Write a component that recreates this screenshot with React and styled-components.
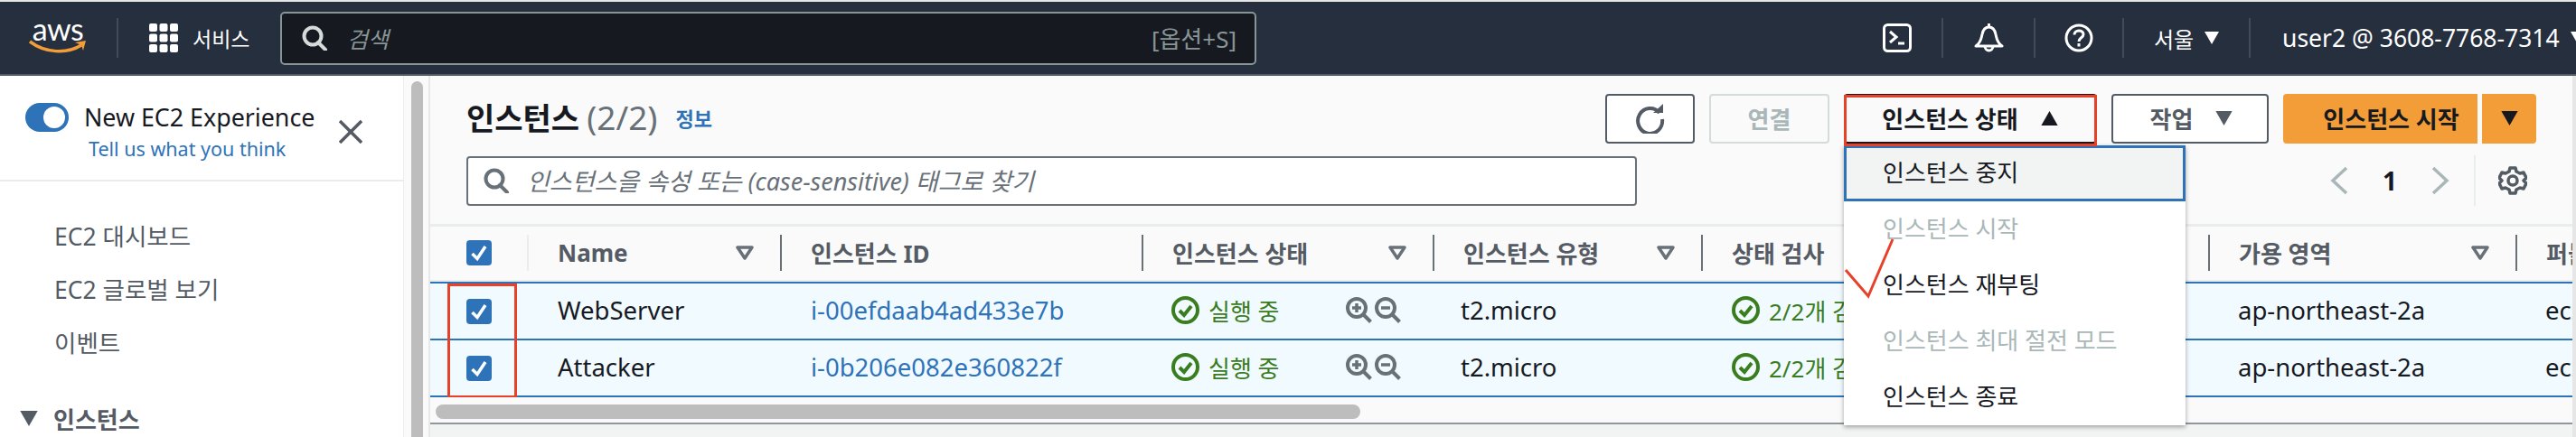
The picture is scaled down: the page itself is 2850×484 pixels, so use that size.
import React from "react";
import styled, { createGlobalStyle } from "styled-components";

const Global = createGlobalStyle`
  html, body {
    margin: 0;
    width: 2850px;
    height: 484px;
    overflow: hidden;
    background: #f2f3f3;
  }
  body, button, input {
    font-family: "Noto Sans", "Noto Sans CJK KR", sans-serif;
  }
  * { box-sizing: border-box; }
`;

const Page = styled.div`
  display: flex;
  flex-direction: column;
  width: 2850px;
  height: 484px;
  padding-top: 2px;
  background: #e6e6e6;
`;

/* top bar */
const Nav = styled.header`
  display: flex;
  align-items: center;
  flex: none;
  height: 82px;
  padding: 0 12px 0 32px;
  background: #252f3e;
  border-bottom: 2px solid #545b64;
  color: #fff;
`;

const Logo = styled.div`
  display: flex;
  flex-direction: column;
  width: 64px;
  height: 42px;
  margin-top: -2px;
`;

const LogoText = styled.span`
  font-family: "Lato", sans-serif;
  font-size: 34px;
  line-height: 24px;
  height: 24px;
  text-align: center;
  letter-spacing: -0.5px;
`;

const NavSep = styled.div`
  flex: none;
  width: 2px;
  height: 44px;
  margin-left: ${(p) => p.$ml || 0}px;
  background: #414b5a;
`;

const ServiceMenu = styled.div`
  display: flex;
  align-items: center;
  gap: 16px;
  width: 145px;
  margin-left: 34px;
  font-size: 23px;
`;

const SearchBox = styled.div`
  display: flex;
  align-items: center;
  width: 1080px;
  height: 59px;
  padding: 0 20px 0 22px;
  background: #16191f;
  border: 2px solid #879596;
  border-radius: 5px;
  color: #aab7b8;
  font-size: 25px;
`;

const SearchHint = styled.span`
  margin-left: 22px;
  font-style: italic;
  color: #879596;
`;

const SearchKey = styled.span`
  margin-left: auto;
  color: #879596;
  font-size: 26px;
`;

const NavRight = styled.div`
  display: flex;
  align-items: center;
  margin-left: auto;
`;

const NavIcon = styled.div`
  display: flex;
  justify-content: center;
  width: ${(p) => p.$w}px;
`;

const NavText = styled.div`
  display: flex;
  align-items: center;
  gap: 12px;
  width: ${(p) => p.$w}px;
  padding-left: ${(p) => p.$pl}px;
  font-size: ${(p) => p.$size}px;
  white-space: nowrap;
`;

/* body */
const Body = styled.div`
  display: flex;
  flex: 1;
  min-height: 0;
`;

const Sidebar = styled.aside`
  flex: none;
  width: 446px;
  background: #fff;
  overflow: hidden;
`;

const Experience = styled.div`
  display: flex;
  height: 117px;
  padding: 30px 0 0 28px;
  border-bottom: 2px solid #eaeded;
`;

const Toggle = styled.div`
  display: flex;
  align-items: center;
  justify-content: flex-end;
  flex: none;
  width: 48px;
  height: 32px;
  padding-right: 4px;
  background: #2e73b8;
  border-radius: 16px;
`;

const ToggleKnob = styled.div`
  width: 24px;
  height: 24px;
  background: #fff;
  border-radius: 50%;
`;

const ExperienceText = styled.div`
  display: flex;
  flex-direction: column;
  width: 282px;
  margin-left: 17px;
`;

const ExperienceTitle = styled.div`
  font-size: 26.8px;
  line-height: 32px;
  color: #16191f;
  white-space: nowrap;
`;

const ExperienceLink = styled.div`
  margin: 4px 0 0 5px;
  font-size: 21.5px;
  line-height: 30px;
  color: #2e73b8;
  white-space: nowrap;
`;

const CloseIcon = styled.svg`
  flex: none;
  margin-top: 19px;
`;

const SideNav = styled.nav`
  padding-top: 32px;
`;

const SideLink = styled.div`
  height: 59px;
  padding-left: 60px;
  font-size: 26.5px;
  line-height: 59px;
  color: #545b64;
`;

const SideGroup = styled.div`
  display: flex;
  align-items: center;
  gap: 17px;
  height: 59px;
  margin-top: 24px;
  padding-left: 22px;
  font-size: 26px;
  font-weight: 700;
  color: #545b64;
`;

const ScrollTrack = styled.div`
  flex: none;
  width: 30px;
  padding: 6px 6px 0 8px;
  background: #fafafa;
  border-left: 1px solid #eee;
  border-right: 2px solid #e8e8e8;
`;

const ScrollThumb = styled.div`
  height: 100%;
  background: #bdbdbd;
  border-radius: 8px 8px 0 0;
`;

const Main = styled.main`
  display: flex;
  flex-direction: column;
  flex: none;
  width: 2370px;
  background: #fafafa;
`;

const TopRow = styled.div`
  display: flex;
  align-items: center;
  height: 55px;
  margin: 20px 40px 0;
`;

const Title = styled.h1`
  margin: -5px 0 0;
  font-size: 34px;
  font-weight: 700;
  color: #16191f;
  white-space: nowrap;
`;

const Count = styled.span`
  margin-left: 8px;
  font-size: 37px;
  font-weight: 400;
  color: #687078;
`;

const InfoLink = styled.span`
  margin: -3px 0 0 20px;
  font-size: 22px;
  font-weight: 700;
  color: #2e73b8;
  white-space: nowrap;
`;

const Actions = styled.div`
  display: flex;
  gap: 16px;
  margin-left: auto;
`;

const Button = styled.button`
  display: flex;
  align-items: center;
  justify-content: center;
  gap: 24px;
  width: ${(p) => p.$w}px;
  height: 55px;
  padding: 0 0 2px ${(p) => p.$pl || 0}px;
  background: #fff;
  border: 2px solid #545b64;
  border-radius: 4px;
  font-size: 26px;
  font-weight: 700;
  color: #545b64;
`;

const DisabledButton = styled(Button)`
  background: #fafafa;
  border-color: #d5dbdb;
  color: #aab7b8;
`;

const StateButton = styled(Button)`
  width: 100%;
  background: #fafafa;
  border-color: #16191f;
  color: #16191f;
`;

const OrangeGroup = styled.div`
  display: flex;
  gap: 5px;
`;

const OrangeButton = styled(Button)`
  background: #f29d38;
  border: 0;
  border-radius: ${(p) => (p.$right ? "0 4px 4px 0" : "4px 0 0 4px")};
  color: #16191f;
`;

const MenuAnchor = styled.div`
  position: relative;
  width: 280px;
  z-index: 3;
`;

const RedBox = styled.div`
  position: absolute;
  top: 1px;
  left: 0;
  width: 100%;
  height: 57px;
  border: 3px solid #e8412a;
  z-index: 2;
`;

const Menu = styled.ul`
  position: absolute;
  top: 57px;
  left: 0;
  width: 378px;
  margin: 0;
  padding: 0;
  list-style: none;
  background: #fff;
  box-shadow: 0 2px 5px rgba(0, 0, 0, 0.35);
`;

const MenuItem = styled.li`
  display: flex;
  align-items: center;
  height: 62px;
  padding: 0 0 4px 43px;
  font-size: 26px;
  color: ${(p) => (p.$off ? "#aab7b8" : "#16191f")};
  ${(p) =>
    p.$focus &&
    `background: #f2f3f3;
     border: 3px solid #2e73b8;
     padding-left: 40px;`}
`;

const RedCheck = styled.svg`
  position: absolute;
  top: 160px;
  left: 0;
  z-index: 2;
`;

const FilterRow = styled.div`
  display: flex;
  align-items: center;
  height: 56px;
  margin: 13px 40px 0;
`;

const FilterBox = styled.div`
  display: flex;
  align-items: center;
  width: 1295px;
  height: 55px;
  padding-left: 17px;
  background: #fff;
  border: 2px solid #687078;
  border-radius: 4px;
`;

const FilterHint = styled.span`
  margin: -2px 0 0 20px;
  font-size: 27px;
  font-style: italic;
  color: #687078;
  white-space: nowrap;
`;

const Pager = styled.div`
  display: flex;
  align-items: center;
  margin-left: auto;
  padding-right: 10px;
`;

const PageNumber = styled.span`
  width: 92px;
  text-align: center;
  font-size: 28px;
  font-weight: 700;
  color: #16191f;
`;

const PagerSep = styled.div`
  width: 2px;
  height: 56px;
  margin: 0 25px 0 27px;
  background: #eaeded;
`;

/* table */
const TableWrap = styled.div`
  position: relative;
  margin-top: 20px;
  border-top: 3px solid #eaeded;
  overflow: hidden;
`;

const columns = "107px 280px 400px 322px 297px 561px 340px 63px";

const HeadRow = styled.div`
  display: grid;
  grid-template-columns: ${columns};
  align-items: center;
  height: 61px;
  padding-bottom: 2px;
  border-bottom: 2px solid #eaeded;
`;

const HeadCell = styled.div`
  display: flex;
  align-items: center;
  justify-content: space-between;
  height: 40px;
  padding: 0 ${(p) => p.$pr || 29}px 0 32px;
  border-left: 2px solid ${(p) => (p.$soft ? "#eaeded" : "#687078")};
  font-size: 26px;
  font-weight: 700;
  color: #545b64;
  white-space: nowrap;
  overflow: hidden;
`;

const CheckCell = styled.div`
  display: flex;
  padding-left: 40px;
`;

const CheckBox = styled.div`
  display: flex;
  align-items: center;
  justify-content: center;
  width: 28px;
  height: 28px;
  background: #2e73b8;
  border-radius: 4px;
`;

const Row = styled.div`
  display: grid;
  grid-template-columns: ${columns};
  align-items: center;
  height: 63px;
  background: #f1faff;
  border-top: 2px solid #2e73b8;
`;

const BottomLine = styled.div`
  height: 2px;
  background: #2e73b8;
`;

const Cell = styled.div`
  display: flex;
  align-items: center;
  padding-left: ${(p) => p.$pl || 33}px;
  padding-bottom: 2px;
  font-size: 27.5px;
  color: ${(p) => p.$color || "#16191f"};
  white-space: nowrap;
  overflow: hidden;
`;

const Status = styled.span`
  display: flex;
  align-items: center;
  flex: none;
  gap: 10px;
  width: ${(p) => p.$w}px;
  font-size: 26px;
  color: #3a7d1e;
`;

const ZoomGroup = styled.span`
  display: flex;
  gap: 3px;
`;

const RedColumn = styled.div`
  position: absolute;
  top: 63px;
  left: 19px;
  width: 77px;
  height: 127px;
  border: 3px solid #e8412a;
`;

const HScroll = styled.div`
  flex: none;
  height: 30px;
  padding: 8px 0 0 6px;
  border-bottom: 2px solid #8f979c;
`;

const HThumb = styled.div`
  width: 1023px;
  height: 16px;
  background: #bdbdbd;
  border-radius: 8px;
`;

const Footer = styled.div`
  flex: 1;
  background: #f2f3f3;
`;

const Caret = ({ up, color = "#fff", w = 16, h = 14 }) => (
  <svg width={w} height={h} viewBox="0 0 16 14" style={{ flex: "none" }}>
    <polygon points={up ? "8,0 16,14 0,14" : "0,0 16,0 8,14"} fill={color} />
  </svg>
);

const FilterIcon = () => (
  <svg width="20" height="16" viewBox="0 0 20 16">
    <polygon points="2,2 18,2 10,14" fill="none" stroke="#687078" strokeWidth="3.5" strokeLinejoin="round" />
  </svg>
);

const SearchIcon = ({ color, size = 28 }) => (
  <svg width={size} height={size} viewBox="0 0 28 28" fill="none" stroke={color} strokeWidth="4">
    <circle cx="12" cy="12" r="9.5" />
    <line x1="18" y1="19" x2="26" y2="27" strokeLinecap="round" />
  </svg>
);

const Tick = () => (
  <svg width="20" height="20" viewBox="0 0 20 20">
    <polyline points="2.5,11 8,16.5 17,3" fill="none" stroke="#fff" strokeWidth="3.5" />
  </svg>
);

const RunIcon = () => (
  <svg width="31" height="31" viewBox="0 0 31 31" fill="none" stroke="#3a7d1e">
    <circle cx="15.5" cy="15.5" r="13.5" strokeWidth="4" />
    <polyline points="9,16 14,21 22,11" strokeWidth="4" />
  </svg>
);

const ZoomIcon = ({ plus }) => (
  <svg width="29" height="29" viewBox="0 0 29 29" fill="none" stroke="#687078" strokeWidth="4">
    <circle cx="12" cy="12" r="10" />
    <line x1="19" y1="19" x2="27.5" y2="27.5" />
    <line x1="7" y1="12" x2="17" y2="12" strokeWidth="3.5" />
    {plus && <line x1="12" y1="7" x2="12" y2="17" strokeWidth="3.5" />}
  </svg>
);

const instances = [
  { name: "WebServer", id: "i-00efdaab4ad433e7b" },
  { name: "Attacker", id: "i-0b206e082e360822f" },
];

const menuItems = [
  { label: "인스턴스 중지", focus: true },
  { label: "인스턴스 시작", off: true },
  { label: "인스턴스 재부팅" },
  { label: "인스턴스 최대 절전 모드", off: true },
  { label: "인스턴스 종료" },
];

const App = () => (
  <Page>
    <Global />
    <Nav>
      <Logo>
        <LogoText>aws</LogoText>
        <svg width="64" height="16" viewBox="0 0 64 16" fill="none">
          <path d="M1 2 C18 15 42 16 58 6" stroke="#f29d38" strokeWidth="3.5" />
          <path d="M51 3 L63 1 L60 12 L58 6 Z" fill="#f29d38" />
        </svg>
      </Logo>
      <NavSep $ml={33} />
      <ServiceMenu>
        <svg width="32" height="32" viewBox="0 0 32 32" fill="#fff">
          {[0, 11.5, 23].map((y) =>
            [0, 11.5, 23].map((x) => <rect key={`${x}-${y}`} x={x} y={y} width="9" height="9" rx="2" />)
          )}
        </svg>
        <span>서비스</span>
      </ServiceMenu>
      <SearchBox>
        <SearchIcon color="#d5dbdb" />
        <SearchHint>검색</SearchHint>
        <SearchKey>[옵션+S]</SearchKey>
      </SearchBox>
      <NavRight>
        <NavIcon $w={98}>
          <svg width="32" height="32" viewBox="0 0 32 32" fill="none" stroke="#fff" strokeWidth="3">
            <rect x="1.5" y="1.5" width="29" height="29" rx="4" />
            <polyline points="8,9 15,15 8,21" />
            <line x1="17" y1="22" x2="24" y2="22" />
          </svg>
        </NavIcon>
        <NavSep />
        <NavIcon $w={100}>
          <svg width="33" height="33" viewBox="0 0 33 33" fill="none" stroke="#fff" strokeWidth="3">
            <path d="M2 25 C8 21 8 16 9 12 C10 7 13 4 16.5 4 C20 4 23 7 24 12 C25 16 25 21 31 25 Z" strokeLinejoin="round" />
            <path d="M12 25 a4.5 5 0 0 0 9 0" />
            <line x1="16.5" y1="0" x2="16.5" y2="4" />
          </svg>
        </NavIcon>
        <NavSep />
        <NavIcon $w={96}>
          <svg width="32" height="32" viewBox="0 0 32 32" fill="none" stroke="#fff" strokeWidth="3">
            <circle cx="16" cy="16" r="14" />
            <path d="M11 12.5 C11 6.5 21 6.5 21 12 C21 16 16 15.5 16 20" />
            <line x1="16" y1="22" x2="16" y2="25.5" />
          </svg>
        </NavIcon>
        <NavSep />
        <NavText $w={138} $pl={33} $size={24}>
          서울 <Caret />
        </NavText>
        <NavSep />
        <NavText $w={348} $pl={35} $size={26.5}>
          user2 @ 3608-7768-7314 <Caret />
        </NavText>
      </NavRight>
    </Nav>

    <Body>
      <Sidebar>
        <Experience>
          <Toggle>
            <ToggleKnob />
          </Toggle>
          <ExperienceText>
            <ExperienceTitle>New EC2 Experience</ExperienceTitle>
            <ExperienceLink>Tell us what you think</ExperienceLink>
          </ExperienceText>
          <CloseIcon width="26" height="26" viewBox="0 0 26 26" stroke="#545b64" strokeWidth="3.5">
            <line x1="1" y1="1" x2="25" y2="25" />
            <line x1="25" y1="1" x2="1" y2="25" />
          </CloseIcon>
        </Experience>
        <SideNav>
          <SideLink>EC2 대시보드</SideLink>
          <SideLink>EC2 글로벌 보기</SideLink>
          <SideLink>이벤트</SideLink>
          <SideGroup>
            <Caret color="#545b64" w={20} h={17} />
            인스턴스
          </SideGroup>
        </SideNav>
      </Sidebar>
      <ScrollTrack>
        <ScrollThumb />
      </ScrollTrack>

      <Main>
        <TopRow>
          <Title>
            인스턴스<Count>(2/2)</Count>
          </Title>
          <InfoLink>정보</InfoLink>
          <Actions>
            <Button $w={99}>
              <svg width="34" height="34" viewBox="0 0 34 34" fill="none">
                <path d="M27 11 A13.5 14 0 1 0 30 18" stroke="#545b64" strokeWidth="4" />
                <polygon points="20,11 31,11 31,1" fill="#545b64" />
              </svg>
            </Button>
            <DisabledButton $w={133}>연결</DisabledButton>
            <MenuAnchor>
              <StateButton>
                인스턴스 상태 <Caret up color="#16191f" w={21} h={16} />
              </StateButton>
              <RedBox />
              <Menu>
                {menuItems.map((item) => (
                  <MenuItem key={item.label} $focus={item.focus} $off={item.off}>
                    {item.label}
                  </MenuItem>
                ))}
              </Menu>
              <RedCheck width="60" height="70" viewBox="0 0 60 70" fill="none" stroke="#e8412a" strokeWidth="3">
                <polyline points="2,35 27,64 54,1" />
              </RedCheck>
            </MenuAnchor>
            <Button $w={174} $pl={4}>
              작업 <Caret color="#545b64" w={21} h={16} />
            </Button>
            <OrangeGroup>
              <OrangeButton $w={215} $pl={24}>
                인스턴스 시작
              </OrangeButton>
              <OrangeButton $w={60} $right>
                <Caret color="#16191f" w={21} h={16} />
              </OrangeButton>
            </OrangeGroup>
          </Actions>
        </TopRow>

        <FilterRow>
          <FilterBox>
            <SearchIcon color="#687078" />
            <FilterHint>인스턴스을 속성 또는 (case-sensitive) 태그로 찾기</FilterHint>
          </FilterBox>
          <Pager>
            <svg width="20" height="32" viewBox="0 0 20 32" fill="none" stroke="#aab7b8" strokeWidth="3.5">
              <polyline points="18,2 3,16 18,30" />
            </svg>
            <PageNumber>1</PageNumber>
            <svg width="20" height="32" viewBox="0 0 20 32" fill="none" stroke="#aab7b8" strokeWidth="3.5">
              <polyline points="2,2 17,16 2,30" />
            </svg>
            <PagerSep />
            <svg width="32" height="32" viewBox="0 0 32 32" fill="none" stroke="#545b64" strokeWidth="3.5">
              <circle cx="16" cy="16" r="5" />
              <path d="M13 2 h6 l1 4 l4 2 l4 -1 l3 6 l-3 3 l3 3 l-3 6 l-4 -1 l-4 2 l-1 4 h-6 l-1 -4 l-4 -2 l-4 1 l-3 -6 l3 -3 l-3 -3 l3 -6 l4 1 l4 -2 Z" strokeLinejoin="round" />
            </svg>
          </Pager>
        </FilterRow>

        <TableWrap>
          <HeadRow>
            <CheckCell>
              <CheckBox>
                <Tick />
              </CheckBox>
            </CheckCell>
            <HeadCell $soft>
              Name <FilterIcon />
            </HeadCell>
            <HeadCell>인스턴스 ID</HeadCell>
            <HeadCell>
              인스턴스 상태 <FilterIcon />
            </HeadCell>
            <HeadCell>
              인스턴스 유형 <FilterIcon />
            </HeadCell>
            <HeadCell>상태 검사</HeadCell>
            <HeadCell>
              가용 영역 <FilterIcon />
            </HeadCell>
            <HeadCell $pr={1}>퍼블릭</HeadCell>
          </HeadRow>
          {instances.map((row) => (
            <Row key={row.id}>
              <CheckCell>
                <CheckBox>
                  <Tick />
                </CheckBox>
              </CheckCell>
              <Cell $pl={34}>{row.name}</Cell>
              <Cell $pl={34} $color="#2e73b8">
                {row.id}
              </Cell>
              <Cell>
                <Status $w={193}>
                  <RunIcon />
                  실행 중
                </Status>
                <ZoomGroup>
                  <ZoomIcon plus />
                  <ZoomIcon />
                </ZoomGroup>
              </Cell>
              <Cell $pl={31}>t2.micro</Cell>
              <Cell $pl={34}>
                <Status $w={300}>
                  <RunIcon />
                  2/2개 검사 통과
                </Status>
              </Cell>
              <Cell>ap-northeast-2a</Cell>
              <Cell>ec2-13-125</Cell>
            </Row>
          ))}
          <BottomLine />
          <RedColumn />
        </TableWrap>
        <HScroll>
          <HThumb />
        </HScroll>
        <Footer />
      </Main>
    </Body>
  </Page>
);

export default App;
